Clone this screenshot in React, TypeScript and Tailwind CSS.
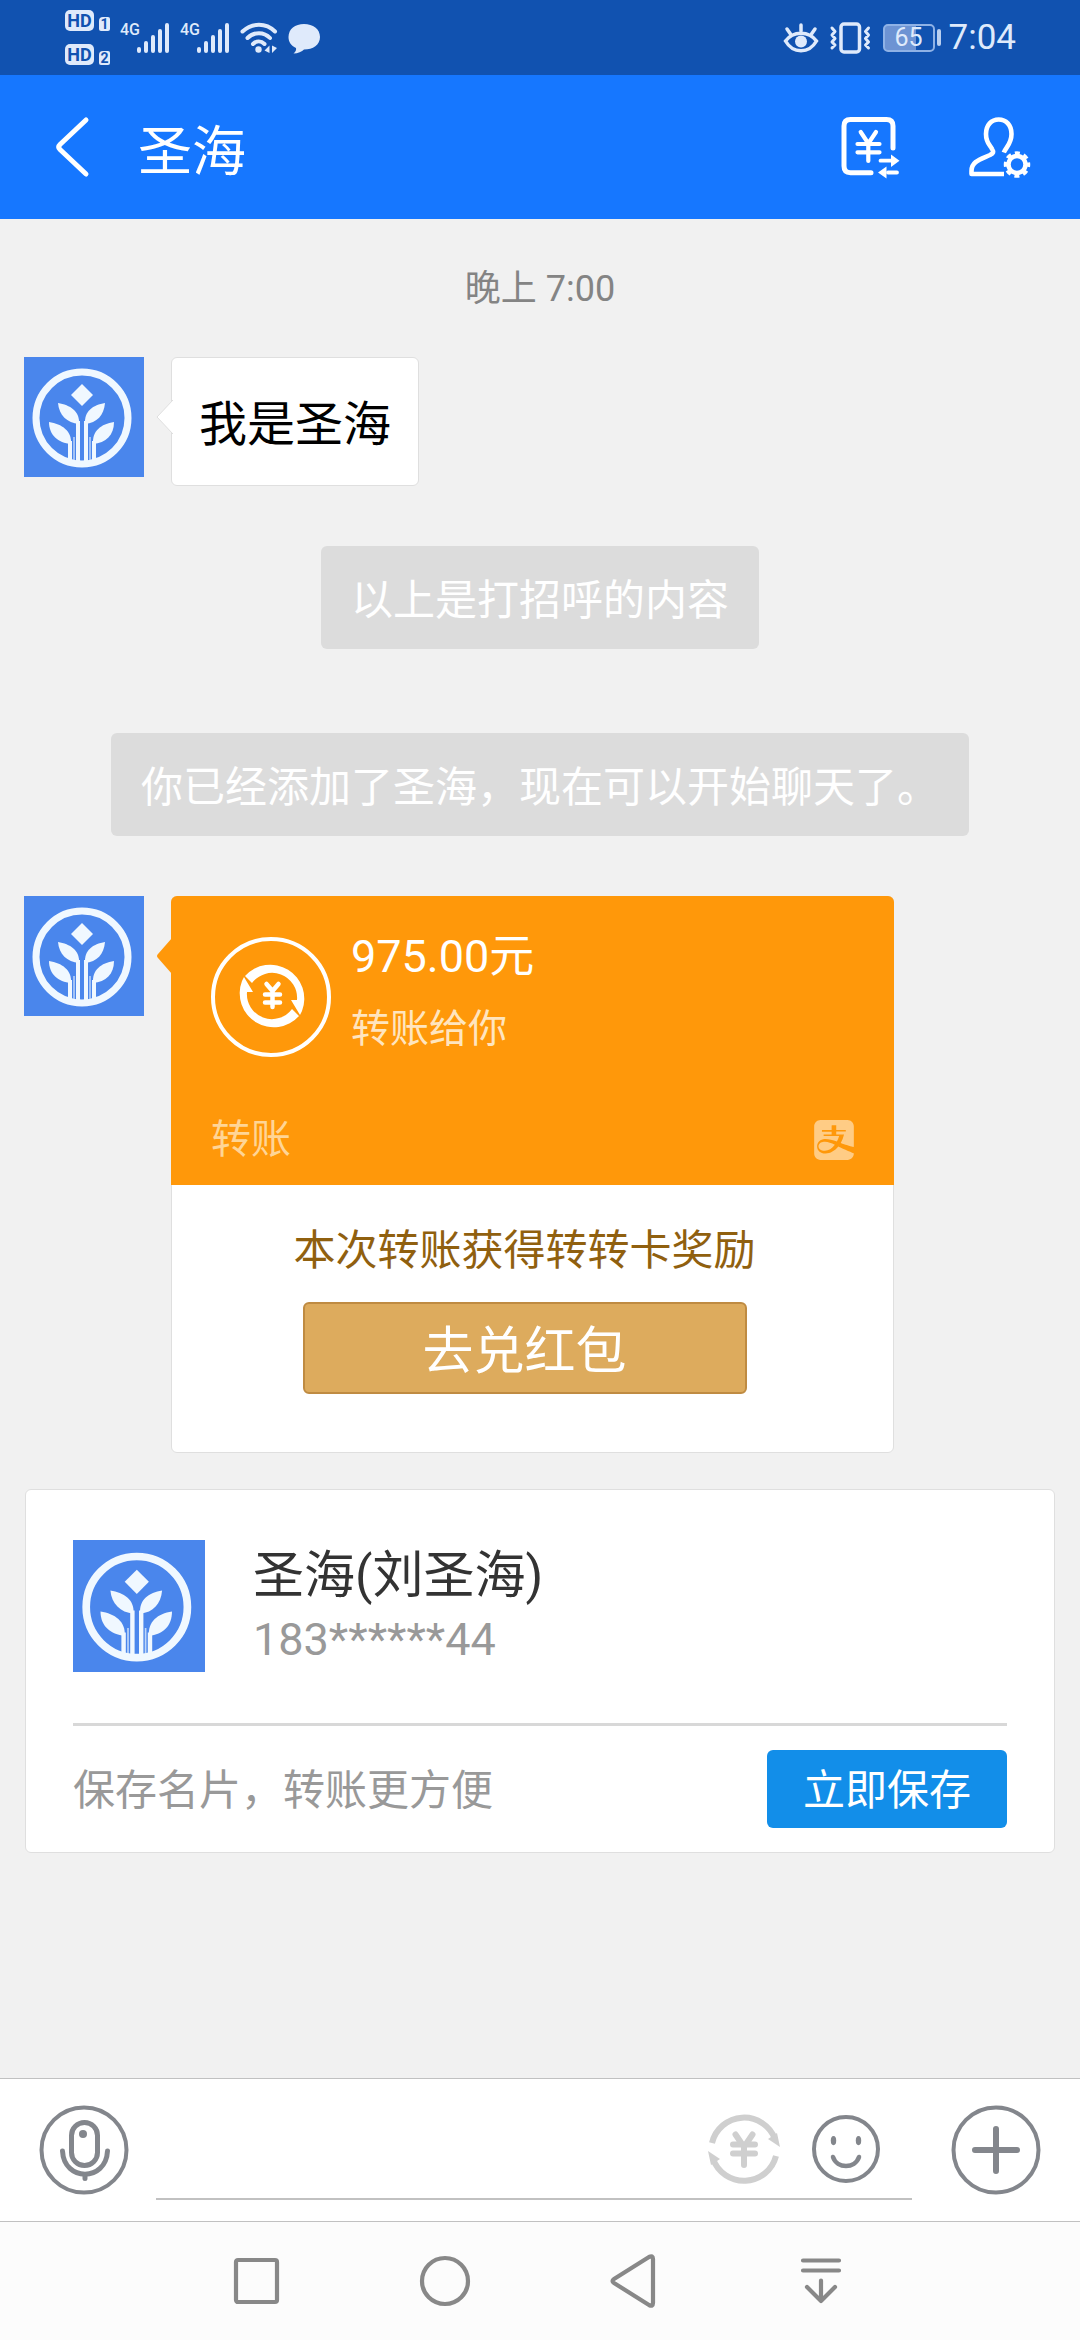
import type { ReactNode } from 'react'
import { SiAlipay } from 'react-icons/si'

const Avatar = ({ className }: { className: string }) => (
  <svg viewBox="0 0 120 120" className={`shrink-0 bg-[#4a86ec] ${className}`} role="img" aria-label="圣海">
    <circle cx="58" cy="61" r="46" fill="none" stroke="#f0f8ff" strokeWidth="7" />
    <g fill="#f0f8ff">
      <path d="M58 27l11 11-11 11-11-11z" />
      <path d="M34 46C46 48 56 54 55 67C43 66 35 58 34 46Z" />
      <path d="M81 46C69 48 60 54 61 67C73 66 80 58 81 46Z" />
      <path d="M25 65C38 67 48 74 47 87C34 86 25 78 25 65Z" />
      <path d="M90 65C77 67 68 74 69 87C82 86 90 78 90 65Z" />
    </g>
    <g fill="none" stroke="#f0f8ff" strokeWidth="4">
      <path d="M46 84V103M54 64V105M62 64V105M70 84V103" />
      <path d="M50 80V104M66 80V104" strokeWidth="1.5" opacity="0.7" />
    </g>
  </svg>
)

const HdBadge = ({ sim }: { sim: string }) => (
  <div className="flex items-end gap-[5px] font-bold text-[#1152b0]">
    <span className="flex h-[21px] w-[29px] items-center justify-center rounded-[5px] bg-[#dfeafb] text-[18px] leading-none">HD</span>
    <span className="flex h-[14px] w-[11px] items-center justify-center rounded-[2px] rounded-tl-[4px] bg-[#dfeafb] text-[14px] leading-none">{sim}</span>
  </div>
)

const Signal = () => (
  <div className="flex items-start">
    <span className="text-[16px] leading-[16px] font-medium">4G</span>
    <svg viewBox="0 0 34 32" className="-ml-1 h-8 w-[34px]" fill="none" stroke="currentColor" strokeWidth="4" strokeLinecap="round" aria-hidden="true">
      <path d="M3 27V29M10 21V29M17 15V29M24 9V29M31 3V29" />
    </svg>
  </div>
)

const StatusBar = () => (
  <div className="flex h-[75px] items-center bg-[#1152b0] pr-16 pl-[65px] text-[#dfeafb]">
    <div className="flex flex-col gap-[13px]">
      <HdBadge sim="1" />
      <HdBadge sim="2" />
    </div>
    <div className="ml-[10px] flex items-center gap-[10px]">
      <Signal />
      <Signal />
      <svg viewBox="0 0 38 32" className="h-8 w-[38px]" fill="none" stroke="currentColor" strokeWidth="4" strokeLinecap="round" aria-hidden="true">
        <path d="M2.500 9.500C12 .5 26 .5 35 9.500M7.500 16C14 9.500 24 9.500 30 16M13 22C16.500 18.500 21 18.500 24.500 22" />
        <circle cx="18.500" cy="27.500" r="3.200" fill="currentColor" stroke="none" />
        <path d="M29.500 23.500V31L24.500 28.500ZM32 23.500L37 26L32 31Z" fill="currentColor" stroke="none" />
      </svg>
      <svg viewBox="0 0 32 32" className="h-8 w-8" fill="currentColor" aria-hidden="true">
        <path d="M16 2C25 2 32 7 32 15C32 23 25 27.500 16 27.500C14 29.500 10 31.500 5.500 31.500C7.500 30 8.500 28 8 26C3 23.500 .5 20 .5 15C.5 7 7 2 16 2Z" />
      </svg>
    </div>
    <div className="ml-auto flex items-center">
      <svg viewBox="0 0 36 32" className="h-8 w-9" fill="none" stroke="currentColor" strokeWidth="3.500" strokeLinecap="round" aria-hidden="true">
        <path d="M2.500 19C10 8.500 26 8.500 33.500 19C26 32 10 32 2.500 19ZM18 3V9M4 7L7.500 12M32 7L28.500 12" />
        <circle cx="18" cy="19.500" r="6" fill="currentColor" stroke="none" />
      </svg>
      <svg viewBox="0 0 42 34" className="ml-[10px] h-[34px] w-[42px]" fill="none" stroke="currentColor" strokeWidth="3.500" strokeLinecap="round" strokeLinejoin="round" aria-hidden="true">
        <rect x="12" y="3" width="18.500" height="28" rx="3" />
        <path d="M3 7L6 10.500L3 14L6 17.500L3 21L6 24L3 27M39.500 7L36.500 10.500L39.500 14L36.500 17.500L39.500 21L36.500 24L39.500 27" strokeWidth="3" />
      </svg>
      <div className="ml-3 flex items-center gap-[2px]">
        <div className="flex h-7 w-[52px] items-center justify-center rounded-[5px] border-2 border-[#8fb2e6] bg-linear-to-r from-[#6d93d3] from-65% to-transparent to-65% text-[25px] leading-none">65</div>
        <div className="h-[17px] w-1 rounded-full bg-[#b9cff0]" />
      </div>
      <span className="ml-2 text-[35px] leading-[42px]">7:04</span>
    </div>
  </div>
)

const Header = () => (
  <header className="flex h-[144px] items-center bg-[#1677ff] pr-12 pl-[52px] text-white">
    <button type="button" aria-label="返回">
      <svg viewBox="0 0 40 64" className="h-16 w-10" fill="none" stroke="currentColor" strokeWidth="5" strokeLinecap="round" strokeLinejoin="round">
        <path d="M34 5L8 29.500Q5.500 32 8 34.500L34 59" />
      </svg>
    </button>
    <h1 className="ml-[46px] pt-3 text-[54px] leading-[64px]">圣海</h1>
    <div className="ml-auto flex items-center gap-[62px]">
      <button type="button" aria-label="转账记录">
        <svg viewBox="0 0 66 66" className="size-[66px]" fill="none" stroke="currentColor" strokeWidth="5" strokeLinecap="round">
          <path d="M55 34V12Q55 5.500 48.500 5.500H12.500Q6 5.500 6 12V52Q6 58.700 12.500 58.700H33" />
          <path d="M22.700 18L30.300 29.500L38 18M30.300 29.500V47M19.500 30H41.500M19.500 38.300H41.500" strokeWidth="4.200" />
          <path d="M42.500 46.700H54M50 58.500H59" strokeWidth="3.800" />
          <path d="M53 40.500L61.500 46.700L53 53ZM48.500 52.500L40 58.500L48.500 64.500Z" fill="currentColor" stroke="none" />
        </svg>
      </button>
      <button type="button" aria-label="好友设置">
        <svg viewBox="0 0 66 66" className="size-[66px]" fill="none" stroke="currentColor" strokeWidth="4.600" strokeLinejoin="round">
          <path d="M37.800 38.500C40 33 45.500 30 45.500 20C45.500 11 40 5.500 32.700 5.500C25.500 5.500 20 11 20 20C20 29 24 31 26 35C28 38 27.500 39 24 41C14 45.500 5.500 47.500 5.500 57V60H38" />
          <circle cx="51" cy="50.500" r="8.500" strokeWidth="4.500" />
          <circle cx="51" cy="50.500" r="11.500" strokeWidth="3.500" strokeDasharray="5 4.030" strokeDashoffset="2.500" />
        </svg>
      </button>
    </div>
  </header>
)

const Notice = ({ children }: { children: ReactNode }) => (
  <p className="self-center rounded-md bg-[#dcdcdc] px-[30px] pt-[29px] pb-[22px] text-[42px] leading-[52px] text-white">{children}</p>
)

const TransferCard = () => (
  <div className="relative w-[723px] rounded-md border border-[#dfdfdf] bg-white">
    <svg viewBox="0 0 16 36" className="absolute top-[41px] -left-4 h-9 w-4" aria-hidden="true">
      <path d="M16 0L2 16Q0 18 2 20L16 36Z" fill="#ff980a" />
    </svg>
    <div className="-mx-px -mt-px rounded-t-md bg-[#ff980a] px-10 pt-[37px] pb-[19px] text-white">
      <div className="flex">
        <svg viewBox="0 0 120 120" className="mt-1 size-[120px]" aria-hidden="true">
          <circle cx="60" cy="60" r="58" fill="none" stroke="currentColor" strokeWidth="4" />
          <g fill="currentColor">
            <path d="M34 39A34 34 0 0 1 91 74L89 78L80 63H86A25 25 0 0 0 41 46Z" />
            <path d="M34 39A34 34 0 0 1 91 74L89 78L80 63H86A25 25 0 0 0 41 46Z" transform="rotate(180 61 59)" />
          </g>
          <path d="M55.500 47L61.500 54L67.500 47M61.500 54V70M54 57.500H69M54 65.500H69" fill="none" stroke="currentColor" strokeWidth="4.500" strokeLinecap="round" />
        </svg>
        <div className="ml-5">
          <p className="text-[45px] leading-[48px]">975.00元</p>
          <p className="mt-[22px] text-[39px] leading-[52px] text-[#ffe5bf]">转账给你</p>
        </div>
      </div>
      <div className="mt-[57px] flex items-center justify-between">
        <span className="text-[40px] leading-[52px] text-[#ffd596]">转账</span>
        <SiAlipay className="size-10 text-[#ffcc85]" aria-label="支付宝" />
      </div>
    </div>
    <div className="flex flex-col items-center pt-10 pr-4 pb-[58px]">
      <p className="text-[42px] leading-[52px] text-[#90600f]">本次转账获得转转卡奖励</p>
      <button type="button" className="mt-[25px] h-[92px] w-[444px] rounded-md border-2 border-[#bf8b42] bg-[#ddab5d] pt-2 text-[51px] leading-[60px] text-white">
        去兑红包
      </button>
    </div>
  </div>
)

const ContactCard = () => (
  <section className="mx-[25px] mt-9 rounded-md border border-[#dfdfdf] bg-white px-[47px] pt-[50px] pb-6">
    <div className="flex">
      <Avatar className="size-[132px]" />
      <div className="ml-12 pt-1">
        <h2 className="text-[51px] leading-[64px] text-[#333]">圣海(刘圣海)</h2>
        <p className="text-[45px] leading-[64px] text-[#999]">183******44</p>
      </div>
    </div>
    <div className="mt-[51px] flex items-center justify-between border-t-3 border-[#d8d8d8] pt-6">
      <p className="pt-1 text-[42px] leading-[52px] text-[#999]">保存名片，转账更方便</p>
      <button type="button" className="h-[78px] w-60 rounded-md bg-[#128ee9] pt-1 text-[42px] leading-[52px] text-white">
        立即保存
      </button>
    </div>
  </section>
)

const Composer = () => (
  <form className="flex h-[144px] items-center border-y border-[#c1c1c1] bg-white px-[39px] text-[#83868c]" onSubmit={(e) => e.preventDefault()}>
    <button type="button" aria-label="语音">
      <svg viewBox="0 0 90 90" className="size-[90px]" fill="none" stroke="currentColor" strokeWidth="5" strokeLinecap="round">
        <circle cx="45" cy="45" r="42.500" strokeWidth="4" />
        <rect x="32.500" y="17.500" width="26" height="43" rx="13" />
        <circle cx="44" cy="29" r="4" fill="currentColor" stroke="none" />
        <path d="M23.500 46C25 77 67 77 68.500 46M46 70V73.500" />
      </svg>
    </button>
    <div className="mr-[39px] ml-[27px] flex h-[100px] flex-1 items-center border-b-2 border-[#c1c1c1] pr-8">
      <input aria-label="消息" className="min-w-0 flex-1 bg-transparent text-[42px] outline-none" />
      <button type="button" aria-label="转账" className="text-[#cfcfcf]">
        <svg viewBox="0 0 72 72" className="size-[72px]" fill="none" stroke="currentColor" strokeWidth="6">
          <path d="M4 30A33 33 0 0 1 67 26M68 43A33 33 0 0 1 5 46" />
          <path d="M60 26L69 20L72 34ZM12 46L3 52L0 38Z" fill="currentColor" stroke="none" />
          <path d="M27.500 21.500L36 34L44.500 21.500M36 34V52M25 31.600H47M25 40.600H47" strokeLinecap="round" />
        </svg>
      </button>
      <button type="button" aria-label="表情" className="ml-8">
        <svg viewBox="0 0 68 68" className="size-[68px]" fill="none" stroke="currentColor" strokeWidth="4">
          <circle cx="34" cy="34" r="32" />
          <path d="M21 42C25 54 43 54 47 42" strokeWidth="4.500" strokeLinecap="round" />
          <g fill="currentColor" stroke="none">
            <ellipse cx="21.500" cy="25.600" rx="2.700" ry="4.600" />
            <ellipse cx="46.500" cy="25.600" rx="2.700" ry="4.600" />
          </g>
        </svg>
      </button>
    </div>
    <button type="button" aria-label="更多">
      <svg viewBox="0 0 90 90" className="size-[90px]" fill="none" stroke="currentColor" strokeLinecap="round">
        <circle cx="45" cy="45" r="42.500" strokeWidth="4" />
        <path d="M24 45H66M45 24V66" strokeWidth="6" />
      </svg>
    </button>
  </form>
)

const navIcons = [
  { label: '最近任务', shape: <rect x="7" y="7" width="41" height="42" rx="2" /> },
  { label: '主屏幕', shape: <circle cx="28" cy="28" r="23" /> },
  { label: '后退', shape: <path d="M48 6V50Q48 54 44 52L9 30Q6 28 9 26L44 4Q48 2 48 6Z" /> },
  { label: '通知栏', shape: <path d="M10 7.500H46M10 17.500H46M28 27.500V48M14 34L28 48L42 34" /> },
]

const NavBar = () => (
  <nav className="flex h-[118px] items-center justify-center bg-[#fcfcfc] pr-0.5">
    {navIcons.map(({ label, shape }) => (
      <button key={label} type="button" aria-label={label} className="flex w-[188px] justify-center text-[#888]">
        <svg viewBox="0 0 56 56" className="size-14" fill="none" stroke="currentColor" strokeWidth="4.200" strokeLinecap="round" strokeLinejoin="round">
          {shape}
        </svg>
      </button>
    ))}
  </nav>
)

const App = () => (
  <div className="flex min-h-screen flex-col bg-[#f1f1f1] font-[Roboto,'Noto_Sans_CJK_SC',sans-serif]">
    <StatusBar />
    <Header />
    <main className="flex flex-1 flex-col">
      <p className="mt-12 text-center text-[36px] leading-[44px] text-[#848484]">晚上 7:00</p>
      <div className="mt-[46px] flex items-start gap-[27px] pl-6">
        <Avatar className="size-[120px]" />
        <div className="relative rounded-md border border-[#dfdfdf] bg-white px-[27px] pt-[37px] pb-[30px] text-[48px] leading-[60px] text-black">
          <svg viewBox="0 0 17 36" className="absolute top-[41px] -left-4 h-9 w-[17px]" aria-hidden="true">
            <path d="M17 1L1 18L17 35" fill="#fff" stroke="#dfdfdf" />
          </svg>
          我是圣海
        </div>
      </div>
      <div className="mt-[60px] flex flex-col gap-[84px]">
        <Notice>以上是打招呼的内容</Notice>
        <Notice>你已经添加了圣海，现在可以开始聊天了。</Notice>
      </div>
      <div className="mt-[60px] flex items-start gap-[27px] pl-6">
        <Avatar className="size-[120px]" />
        <TransferCard />
      </div>
      <ContactCard />
    </main>
    <Composer />
    <NavBar />
  </div>
)

export default App
